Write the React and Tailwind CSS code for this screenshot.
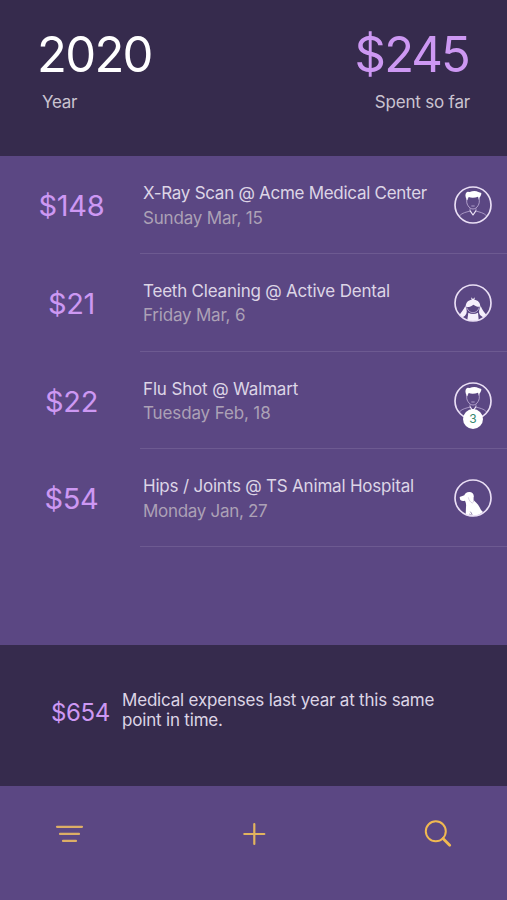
import React from 'react';

const expenses = [
    { amount: '$148', title: 'X-Ray Scan @ Acme Medical Center', date: 'Sunday Mar, 15', who: 'man', titleTrack: 'tracking-[-0.28px]', dateTrack: 'tracking-[-0.18px]' },
    { amount: '$21', title: 'Teeth Cleaning @ Active Dental', date: 'Friday Mar, 6', who: 'girl', titleTrack: 'tracking-[-0.21px]', dateTrack: 'tracking-[-0.2px]' },
    { amount: '$22', title: 'Flu Shot @ Walmart', date: 'Tuesday Feb, 18', who: 'man', titleTrack: 'tracking-[-0.15px]', dateTrack: 'tracking-[-0.13px]', count: 3 },
    { amount: '$54', title: 'Hips / Joints @ TS Animal Hospital', date: 'Monday Jan, 27', who: 'dog', titleTrack: 'tracking-[-0.2px]', dateTrack: 'tracking-[-0.3px]' },
];

function Man() {
    return (
        <g>
            <path d="M35 33C33 25 35 19 41 17L47 18C56 14 67 14 73 18L82 21C82 27 80 31 76 36L75 42L72 32C63 36 51 36 44 33L40 43L38 43Z" fill="#fff" />
            <path d="M39 36C37 46 38 53 42 59C46 66 52 69 57 69C62 69 68 66 72 59C76 53 77 46 75 36" fill="none" stroke="#d0c0e4" strokeWidth="2.2" />
            <path d="M48 67V75M66 75V67M48 75C36 79 25 80 17 89M66 75C78 79 89 80 97 89" fill="none" stroke="#c3b2da" strokeWidth="2.2" />
            <path d="M48 74L57 87L66 74" fill="none" stroke="#eee5f7" strokeWidth="3.5" strokeLinejoin="round" />
            <path d="M52 60H62" fill="none" stroke="#d8c8ec" strokeWidth="2" />
        </g>
    );
}

function Girl() {
    return (
        <g fill="#f5effb">
            <path d="M35 68C35 55 43 48 53 47L51 40L57 45L63 40L61 47C72 48 79 56 79 68C71 70 65 66 58 62C51 67 43 71 35 68Z" />
            <path d="M37 66C40 79 48 86 57 86C66 86 74 79 77 66" fill="none" stroke="#d8c8ec" strokeWidth="2" />
            <path d="M34 66C40 78 40 88 33 95L24 101L17 92C21 86 27 80 34 66ZM80 66C86 80 91 85 97 92L89 101L79 94C73 86 75 78 80 66Z" />
            <path d="M43 86C52 91 62 91 72 86L74 107C63 112 50 112 40 107Z" />
        </g>
    );
}

function Dog() {
    return (
        <g fill="#fff">
            <path d="M17 54L31 49C33 42 39 38 48 39C57 40 61 48 59 57L59 64C69 72 77 83 81 93L87 99C71 113 50 115 35 107L36 84C37 77 36 71 33 65C26 67 20 66 18 61Z" />
            <path d="M43 55C45 64 49 70 55 72C60 70 60 62 58 54" fill="none" stroke="#a595c1" strokeWidth="1.3" />
            <path d="M49 98C53 103 55 107 53 109M46 105L51 109" fill="none" stroke="#5b4783" strokeWidth="2" />
        </g>
    );
}

function Avatar({ who, count }) {
    return (
        <div className="relative size-[38px] shrink-0">
            <svg viewBox="0 0 114 114" className="size-[38px]">
                {who === 'man' && <Man />}
                {who === 'girl' && <Girl />}
                {who === 'dog' && <Dog />}
                <circle cx="57" cy="57" r="54" fill="none" stroke="#eadff5" strokeWidth="5" />
            </svg>
            {count && (
                <span className="absolute left-[9px] top-[27px] flex size-5 items-center justify-center rounded-full bg-white text-xs text-[#35896f]">{count}</span>
            )}
        </div>
    );
}

export default function App() {
    return (
        <div className="flex h-[900px] w-full flex-col overflow-hidden bg-[#5b4783] font-['Inter',sans-serif] text-[#ddd5e6]">
            <header className="flex h-[156px] shrink-0 justify-between bg-[#362b4d] pl-[37px] pr-[37px] pt-[25px]">
                <div>
                    <h1 className="text-[49px] leading-[60px] tracking-[-1.7px] text-white">2020</h1>
                    <p className="ml-[5px] mt-[5px] text-[17px] leading-6 tracking-[-0.3px] text-[#cac3d0]">Year</p>
                </div>
                <div className="text-right">
                    <div className="mr-px text-[49px] leading-[60px] tracking-[-1.9px] text-[#cd98f3]">$245</div>
                    <p className="mt-[5px] text-[17px] leading-6 tracking-[-0.2px] text-[#cac3d0]">Spent so far</p>
                </div>
            </header>

            <main className="h-[489px] shrink-0">
                {expenses.map((item) => (
                    <div key={item.title} className="flex h-[97.8px]">
                        <div className="w-[140px] shrink-0 pl-[3px] pt-[30px] text-center text-[29px] leading-10 tracking-[-0.3px] text-[#cd98f3]">{item.amount}</div>
                        <div className="flex flex-1 justify-between border-b border-[#6d5a91] pl-[3px] pr-[15px] pt-[25px]">
                            <div className="whitespace-nowrap text-[17px] leading-6">
                                <p className={item.titleTrack}>{item.title}</p>
                                <p className={`mt-[0.5px] text-[#aca1b6] ${item.dateTrack}`}>{item.date}</p>
                            </div>
                            <div className="pt-[5px]">
                                <Avatar who={item.who} count={item.count} />
                            </div>
                        </div>
                    </div>
                ))}
            </main>

            <section className="flex h-[141px] shrink-0 items-start bg-[#362b4d] pl-[51px] pt-[45px]">
                <span className="w-[71px] pt-2 text-2xl leading-[30px] tracking-[-0.4px] text-[#cd98f3]">$654</span>
                <p className="whitespace-nowrap text-[17px] leading-5 tracking-[-0.19px]">
                    Medical expenses last year at this same<br />point in time.
                </p>
            </section>

            <nav className="flex flex-1 items-start justify-between px-[54px] pt-[33px]">
                <button aria-label="Filter">
                    <svg width="30" height="30" fill="none" stroke="#dcae66" strokeWidth="2.2" strokeLinecap="round">
                        <path d="M3 7.8H28M6 14.9H25M9 21.9H22" />
                    </svg>
                </button>
                <button aria-label="Add">
                    <svg width="30" height="30" fill="none" stroke="#e2b45e" strokeWidth="2.2" strokeLinecap="round">
                        <path d="M5.3 15H25.3M15.3 5V25" />
                    </svg>
                </button>
                <button aria-label="Search">
                    <svg width="30" height="30" fill="none" stroke="#f1b951" strokeWidth="2" strokeLinecap="round">
                        <circle cx="12.8" cy="12.3" r="10" />
                        <path d="M20 19.5L26.7 26.2" strokeWidth="2.8" />
                    </svg>
                </button>
            </nav>
        </div>
    );
}
